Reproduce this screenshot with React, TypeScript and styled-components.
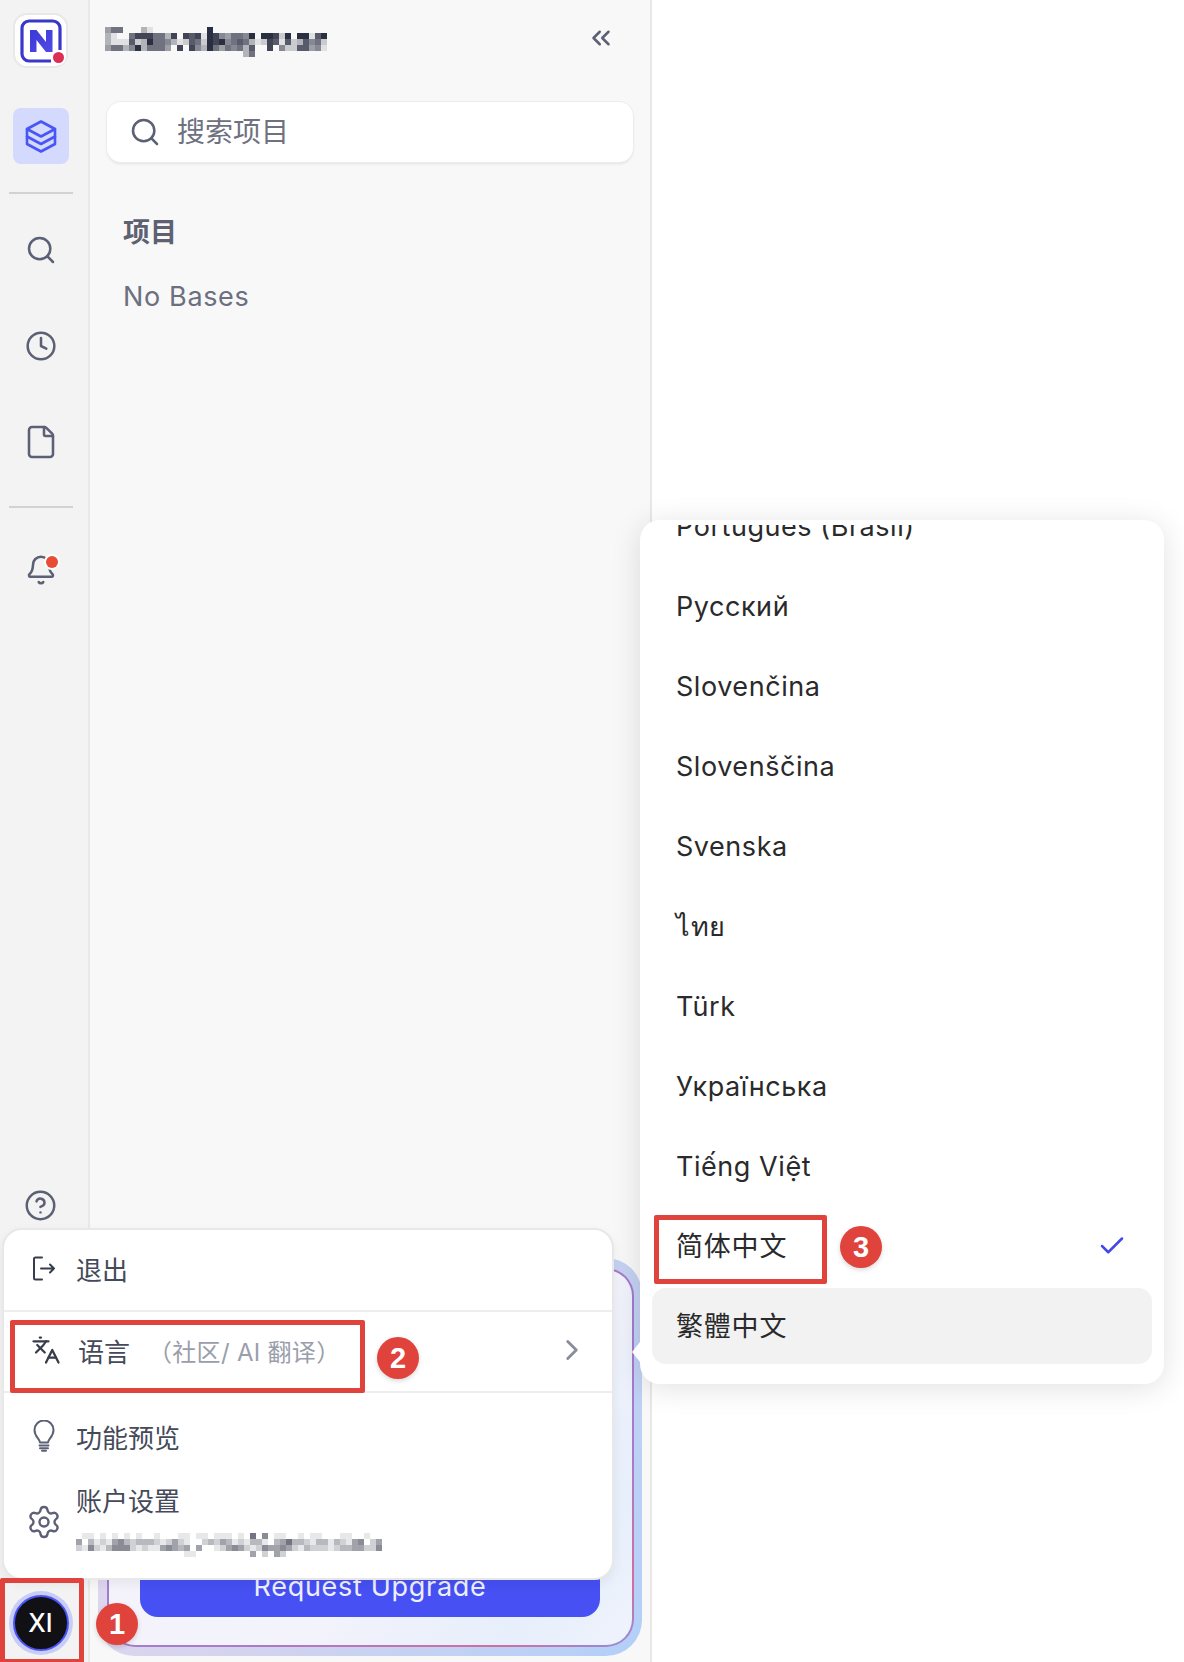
import React from "react";
import styled, { createGlobalStyle } from "styled-components";
import {
  Search,
  Clock,
  File,
  Bell,
  CircleHelp,
  ChevronsLeft,
  ChevronRight,
  Languages,
  Settings,
  Check,
} from "lucide-react";

const Global = createGlobalStyle`
  * { box-sizing: border-box; }
  html, body { margin: 0; padding: 0; background: #fff; }
  body { font-family: Inter, "Noto Sans CJK SC", "Noto Sans", sans-serif; }
`;

const Page = styled.div`
  position: relative;
  width: 1184px;
  height: 1662px;
  display: flex;
  overflow: hidden;
  background: #fff;
`;

const Rail = styled.nav`
  width: 90px;
  flex: none;
  display: flex;
  flex-direction: column;
  align-items: center;
  padding: 13px 7px 7px 0;
  background: #f3f3f3;
  border-right: 2px solid #e8e8e8;
`;

const LogoTile = styled.div`
  position: relative;
  width: 55px;
  height: 55px;
  display: flex;
  align-items: center;
  justify-content: center;
  background: #fff;
  border: 2px solid #e8e8e8;
  border-radius: 14px;
  margin-bottom: 40px;
`;

const LogoDot = styled.span`
  position: absolute;
  right: 2px;
  bottom: 3px;
  width: 11px;
  height: 11px;
  border-radius: 50%;
  background: #dc2f55;
  box-shadow: 0 0 0 2px #fff;
`;

const ActiveTile = styled.div`
  width: 56px;
  height: 56px;
  display: flex;
  align-items: center;
  justify-content: center;
  border-radius: 8px;
  background: #d3dafd;
  color: #4a55f5;
`;

const RailRule = styled.hr<{ $before: number; $after: number }>`
  width: 64px;
  height: 2px;
  flex: none;
  border: 0;
  margin: ${(p) => p.$before}px 0 ${(p) => p.$after}px;
  background: #d2d2d6;
`;

const NavCell = styled.div`
  position: relative;
  width: 56px;
  height: 96px;
  flex: none;
  display: flex;
  align-items: center;
  justify-content: center;
  color: #5b6074;
`;

const BellDot = styled.span`
  position: absolute;
  left: 33px;
  top: 34px;
  width: 12px;
  height: 12px;
  border-radius: 50%;
  background: #ea4b35;
  box-shadow: 0 0 0 2px #fff;
`;

const HelpCell = styled.div`
  margin-top: auto;
  margin-bottom: 370px;
  height: 32px;
  display: flex;
  align-items: center;
  color: #5b6074;
`;

const Avatar = styled.div`
  width: 56px;
  height: 56px;
  flex: none;
  margin: 4px 0;
  display: flex;
  align-items: center;
  justify-content: center;
  border-radius: 50%;
  background: #111115;
  border: 2px solid #4a55f5;
  box-shadow: 0 0 0 4px #c9cdf5;
  color: #fff;
  font-size: 25px;
  font-weight: 500;
`;

const Sidebar = styled.aside`
  width: 562px;
  flex: none;
  display: flex;
  flex-direction: column;
  background: #f8f8f8;
  border-right: 2px solid #e8e8e8;
`;

const SidebarHeader = styled.header`
  height: 84px;
  margin-bottom: 18px;
  padding: 0 34px 0 15px;
  display: flex;
  align-items: center;
  justify-content: space-between;
  color: #5b6074;
`;

const CollapseIcon = styled.span`
  display: flex;
  margin-top: -8px;
`;

const SearchBox = styled.div`
  height: 60px;
  margin: 0 17px;
  padding: 0 22px;
  display: flex;
  align-items: center;
  gap: 16px;
  background: #fff;
  border-radius: 14px;
  box-shadow: 0 0 0 1px #ececec, 0 2px 3px rgba(0, 0, 0, 0.09);
  color: #5b6074;
`;

const SearchPlaceholder = styled.span`
  font-size: 28px;
  line-height: 36px;
  color: #6d7180;
`;

const SectionTitle = styled.h2`
  margin: 54px 0 0 33px;
  font-size: 27px;
  line-height: 34px;
  font-weight: 700;
  color: #5d6170;
`;

const EmptyNote = styled.p`
  margin: 29px 0 0 33px;
  font-size: 27px;
  line-height: 36px;
  letter-spacing: 0.65px;
  color: #6b6f7e;
`;

const UpgradeCard = styled.section`
  margin: auto 8px 6px;
  height: 398px;
  padding: 10px 8px 9px 9px;
  border-radius: 36px;
  background: linear-gradient(120deg, #e9daf0 0%, #d5d3ee 45%, #b3cff8 100%);
`;

const UpgradeRing = styled.div`
  height: 100%;
  padding: 2px;
  border-radius: 28px;
  background: linear-gradient(
    155deg,
    #c96f9e 0%,
    #a07cd0 45%,
    #a97cc9 70%,
    #d06fa0 90%,
    #8f8fe0 100%
  );
`;

const UpgradeBody = styled.div`
  height: 100%;
  padding: 0 32px 28px 31px;
  display: flex;
  flex-direction: column;
  justify-content: flex-end;
  border-radius: 26px;
  background: linear-gradient(130deg, #f6f4fb 0%, #f3f3fb 60%, #e6effb 85%, #f0f3fc 100%);
`;

const UpgradeButton = styled.button`
  height: 62px;
  border: 0;
  border-radius: 18px;
  padding: 0;
  background: #4650f3;
  color: #eef0ff;
  font: inherit;
  font-size: 27px;
  letter-spacing: 0.7px;
`;

const Main = styled.main`
  flex: 1;
  background: #fff;
`;

const AccountMenu = styled.div`
  position: absolute;
  left: 2px;
  top: 1228px;
  width: 612px;
  height: 352px;
  display: flex;
  flex-direction: column;
  background: #fff;
  border: 2px solid #e8e8e8;
  border-radius: 20px;
  box-shadow: 0 4px 12px rgba(0, 0, 0, 0.06);
`;

const MenuSection = styled.div<{ $height: number }>`
  height: ${(p) => p.$height}px;
  padding-bottom: 3px;
  flex: none;
  display: flex;
  flex-direction: column;
  justify-content: center;
  border-bottom: 2px solid #eeeeee;
`;

const MenuRow = styled.div<{ $inset?: number; $height?: number }>`
  height: ${(p) => (p.$height ? `${p.$height}px` : "auto")};
  padding: 0 23px 0 ${(p) => p.$inset ?? 26}px;
  display: flex;
  align-items: center;
  gap: 18px;
  font-size: 26px;
  color: #454a59;
`;

const AccountRow = styled(MenuRow)`
  margin-top: 8px;
`;

const MenuIcon = styled.span<{ $dark?: boolean }>`
  width: 28px;
  height: 32px;
  flex: none;
  display: flex;
  align-items: center;
  justify-content: center;
  color: ${(p) => (p.$dark ? "#383d4c" : "#5b6074")};
  svg {
    flex: none;
  }
`;

const MenuHint = styled.span`
  font-size: 24px;
  letter-spacing: 0.3px;
  color: #9a9eab;
`;

const MenuTrail = styled.span`
  margin-left: auto;
  display: flex;
  color: #8a8e9b;
`;

const AccountText = styled.div`
  display: flex;
  flex-direction: column;
  gap: 13px;
  margin-top: -3px;
`;

const AccountName = styled.span`
  line-height: 36px;
`;

const LanguagePanel = styled.div`
  position: absolute;
  left: 640px;
  top: 520px;
  width: 524px;
  height: 864px;
  padding: 5px 0 20px;
  display: flex;
  flex-direction: column;
  background: #fff;
  border-radius: 20px;
  box-shadow: 0 4px 30px rgba(0, 0, 0, 0.12);
`;

const LanguageList = styled.div`
  flex: 1;
  min-height: 0;
  padding: 0 12px;
  display: flex;
  flex-direction: column;
  justify-content: flex-end;
  gap: 4px;
  overflow: hidden;
`;

const PanelCaret = styled.span`
  position: absolute;
  left: -8px;
  bottom: 22px;
  width: 0;
  height: 0;
  border-top: 10px solid transparent;
  border-bottom: 10px solid transparent;
  border-right: 8px solid #fff;
`;

const LanguageRow = styled.div<{ $hover?: boolean }>`
  height: 76px;
  flex: none;
  padding: 0 25px 0 24px;
  display: flex;
  align-items: center;
  justify-content: space-between;
  border-radius: 14px;
  background: ${(p) => (p.$hover ? "#f2f2f2" : "transparent")};
  font-size: 27px;
  letter-spacing: 0.55px;
  color: #2a2a2c;
`;

const CjkLabel = styled.span`
  margin-top: -3px;
  letter-spacing: 0.8px;
`;

const CheckMark = styled.span`
  display: flex;
  color: #4348e8;
`;

const Callout = styled.div<{ $x: number; $y: number; $w: number; $h: number }>`
  position: absolute;
  left: ${(p) => p.$x}px;
  top: ${(p) => p.$y}px;
  width: ${(p) => p.$w}px;
  height: ${(p) => p.$h}px;
  border: 5px solid #e0433c;
  border-radius: 2px;
`;

const StepBadge = styled.span<{ $x: number; $y: number }>`
  position: absolute;
  left: ${(p) => p.$x - 21}px;
  top: ${(p) => p.$y - 21}px;
  width: 42px;
  height: 42px;
  display: flex;
  align-items: center;
  justify-content: center;
  border-radius: 50%;
  background: #e0433c;
  box-shadow: 0 2px 5px rgba(0, 0, 0, 0.15);
  color: #fff;
  font-size: 29px;
  font-weight: 700;
  font-family: "Liberation Sans", sans-serif;
`;

const Mosaic: React.FC<{ rows: string[]; cell: number; label: string }> = ({ rows, cell, label }) => {
  const cols = Math.max(...rows.map((r) => r.length));
  return (
    <svg width={cols * cell} height={rows.length * cell} role="img" aria-label={label} shapeRendering="crispEdges" style={{ display: "block", flex: "none" }}>
      {rows.flatMap((row, y) =>
        row.split("").map((c, x) =>
          c === "0" ? null : (
            <rect key={`${x}-${y}`} x={x * cell} y={y * cell} width={cell} height={cell} fill="#1f2437" fillOpacity={Number(c) / 9.5} />
          ),
        ),
      )}
    </svg>
  );
};

const titleRows = [
  "4660003100000000090000000000000000000",
  "3100688866380878198546659099829099179",
  "3111723966531276298956763128717237562",
  "4663593666408085396465637008052277451",
  "0000000000000000000000036000000000000",
];

const emailRows = [
  "011010101010010001101101110106050110010110001100100",
  "403121453233321242100232431213310346332133132145024",
  "215213555212114543404001245421254454213222123344225",
  "000000000000000000110000000004020420000000000000000",
];

const LogoMark = () => (
  <svg width="44" height="44" viewBox="0 0 44 44" aria-hidden="true">
    <defs>
      <linearGradient id="logoN" x1="0" y1="0" x2="1" y2="1">
        <stop offset="0" stopColor="#3b3ad6" />
        <stop offset="1" stopColor="#4f49e8" />
      </linearGradient>
    </defs>
    <path d="M41 31V9a7 7 0 0 0-7-7H10a7 7 0 0 0-7 7v26a7 7 0 0 0 7 7h22" fill="none" stroke="#3a37c9" strokeWidth="3.2" />
    <path d="M11 33V11h6.5L27 23V11h6.5v22H27l-9.5-12v12z" fill="url(#logoN)" />
  </svg>
);

const StackIcon = () => (
  <svg width="32" height="33" viewBox="0 0 32 33" fill="none" stroke="currentColor" strokeWidth="2.6" strokeLinejoin="round" strokeLinecap="round" aria-hidden="true">
    <path d="M16 1.5L30 9v15l-14 7.5L2 24V9z" />
    <path d="M2 9l14 7.5L30 9" />
    <path d="M2 16.5L16 24l14-7.5" />
  </svg>
);

const ExitIcon = () => (
  <svg width="24" height="25" viewBox="0 0 24 25" fill="none" stroke="currentColor" strokeWidth="2" strokeLinecap="round" strokeLinejoin="round" aria-hidden="true">
    <path d="M10 1.5H3.5A1.5 1.5 0 0 0 2 3v19a1.5 1.5 0 0 0 1.5 1.5H10" />
    <path d="M9 12.5h13M18 8.5l4 4-4 4" />
  </svg>
);

const BulbIcon = () => (
  <svg width="22" height="32" viewBox="0 0 22 32" fill="none" stroke="currentColor" strokeWidth="2" strokeLinecap="round" strokeLinejoin="round" aria-hidden="true">
    <path d="M7 22.5c0-3.5-5.5-5.5-5.5-12.5a9.5 9.5 0 0 1 19 0c0 7-5.5 9-5.5 12.5z" />
    <path d="M6.5 25.5h9M7 28.2h8M9 30.8h4" />
  </svg>
);

const languages = [
  "Português (Brasil)",
  "Русский",
  "Slovenčina",
  "Slovenščina",
  "Svenska",
  "ไทย",
  "Türk",
  "Українська",
  "Tiếng Việt",
];

export default function App() {
  return (
    <Page>
      <Global />
      <Rail>
        <LogoTile>
          <LogoMark />
          <LogoDot />
        </LogoTile>
        <ActiveTile>
          <StackIcon />
        </ActiveTile>
        <RailRule $before={28} $after={8} />
        <NavCell>
          <Search size={32} strokeWidth={1.9} />
        </NavCell>
        <NavCell>
          <Clock size={32} strokeWidth={1.9} />
        </NavCell>
        <NavCell>
          <File size={36} strokeWidth={1.7} />
        </NavCell>
        <RailRule $before={16} $after={14} />
        <NavCell>
          <Bell size={32} strokeWidth={1.9} />
          <BellDot />
        </NavCell>
        <HelpCell>
          <CircleHelp size={33} strokeWidth={1.8} />
        </HelpCell>
        <Avatar>XI</Avatar>
      </Rail>

      <Sidebar>
        <SidebarHeader>
          <Mosaic rows={titleRows} cell={6} label="Workspace name, pixelated" />
          <CollapseIcon>
            <ChevronsLeft size={30} strokeWidth={2} />
          </CollapseIcon>
        </SidebarHeader>
        <SearchBox>
          <Search size={32} strokeWidth={1.9} />
          <SearchPlaceholder>搜索项目</SearchPlaceholder>
        </SearchBox>
        <SectionTitle>项目</SectionTitle>
        <EmptyNote>No Bases</EmptyNote>
        <UpgradeCard>
          <UpgradeRing>
            <UpgradeBody>
              <UpgradeButton>Request Upgrade</UpgradeButton>
            </UpgradeBody>
          </UpgradeRing>
        </UpgradeCard>
      </Sidebar>

      <Main />

      <AccountMenu>
        <MenuSection $height={82}>
          <MenuRow>
            <MenuIcon $dark>
              <ExitIcon />
            </MenuIcon>
            退出
          </MenuRow>
        </MenuSection>
        <MenuSection $height={81}>
          <MenuRow $inset={28}>
            <MenuIcon $dark>
              <Languages size={30} strokeWidth={1.8} />
            </MenuIcon>
            语言
            <MenuHint>（社区/ AI 翻译）</MenuHint>
            <MenuTrail>
              <ChevronRight size={34} strokeWidth={2} />
            </MenuTrail>
          </MenuRow>
        </MenuSection>
        <MenuRow $height={86}>
          <MenuIcon>
            <BulbIcon />
          </MenuIcon>
          功能预览
        </MenuRow>
        <AccountRow>
          <MenuIcon>
            <Settings size={36} strokeWidth={1.6} />
          </MenuIcon>
          <AccountText>
            <AccountName>账户设置</AccountName>
            <Mosaic rows={emailRows} cell={6} label="Email address, pixelated" />
          </AccountText>
        </AccountRow>
      </AccountMenu>

      <LanguagePanel>
        <PanelCaret />
        <LanguageList>
          {languages.map((l) => (
            <LanguageRow key={l}>{l}</LanguageRow>
          ))}
          <LanguageRow>
            <CjkLabel>简体中文</CjkLabel>
            <CheckMark>
              <Check size={30} strokeWidth={2} />
            </CheckMark>
          </LanguageRow>
          <LanguageRow $hover>
            <CjkLabel>繁體中文</CjkLabel>
          </LanguageRow>
        </LanguageList>
      </LanguagePanel>

      <Callout $x={0} $y={1578} $w={84} $h={86} />
      <StepBadge $x={117} $y={1624}>1</StepBadge>
      <Callout $x={10} $y={1320} $w={355} $h={73} />
      <StepBadge $x={398} $y={1358}>2</StepBadge>
      <Callout $x={654} $y={1215} $w={173} $h={69} />
      <StepBadge $x={861} $y={1247}>3</StepBadge>
    </Page>
  );
}
